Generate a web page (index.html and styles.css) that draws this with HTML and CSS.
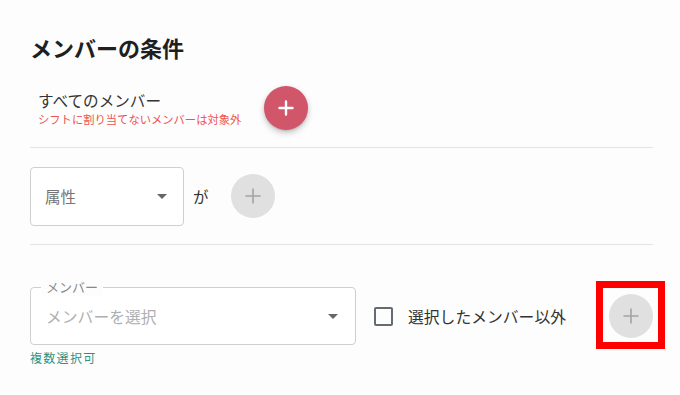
FILE: index.html
```html
<!DOCTYPE html>
<html lang="ja">
<head>
<meta charset="utf-8">
<link rel="stylesheet" href="styles.css">
</head>
<body>
<div class="panel">
  <h2 class="title">メンバーの条件</h2>
  <div class="row row-all">
    <div class="all-text">
      <div class="all-main">すべてのメンバー</div>
      <div class="all-note">シフトに割り当てないメンバーは対象外</div>
    </div>
    <button class="fab fab-red" aria-label="追加">
      <svg width="16" height="16" viewBox="0 0 16 16"><path d="M8 1.5v13M1.5 8h13" stroke="#fff" stroke-width="2.4" stroke-linecap="round"/></svg>
    </button>
  </div>
  <div class="divider"></div>
  <div class="row row-attr">
    <div class="select select-attr">
      <span class="select-value">属性</span>
      <span class="arrow"></span>
    </div>
    <span class="ga">が</span>
    <button class="fab fab-gray" aria-label="追加">
      <svg width="18" height="18" viewBox="0 0 18 18"><path d="M9 1.5v15M1.5 9h15" stroke="#a3a3a3" stroke-width="1.6"/></svg>
    </button>
  </div>
  <div class="divider"></div>
  <div class="row row-member">
    <div class="field">
      <div class="select select-member">
        <span class="float-label">メンバー</span>
        <span class="select-placeholder">メンバーを選択</span>
        <span class="arrow"></span>
      </div>
      <div class="helper">複数選択可</div>
    </div>
    <label class="check">
      <span class="box"></span>
      <span class="check-text">選択したメンバー以外</span>
    </label>
    <div class="fab-wrap">
      <button class="fab fab-gray" aria-label="追加">
        <svg width="18" height="18" viewBox="0 0 18 18"><path d="M9 1.5v15M1.5 9h15" stroke="#a3a3a3" stroke-width="1.6"/></svg>
      </button>
      <div class="highlight"></div>
    </div>
  </div>
</div>
</body>
</html>
```

FILE: styles.css
```css
* { box-sizing: border-box; }
html, body {
  margin: 0;
  padding: 0;
  background: #fdfdfd;
}
body {
  width: 680px;
  height: 395px;
  overflow: hidden;
  font-family: "Noto Sans CJK JP", "Noto Sans", sans-serif;
  color: #333;
}
.panel {
  padding: 34px 27px 0 30px;
}
.title {
  margin: 0;
  font-size: 22px;
  line-height: 26px;
  font-weight: 700;
  color: #1f1f1f;
}
.row {
  display: flex;
  align-items: center;
}
.row-all {
  margin-top: 8px;
  height: 79px;
}
.all-text {
  padding-left: 8px;
}
.all-main {
  font-size: 15.6px;
  line-height: 22px;
  color: #333;
}
.all-note {
  font-size: 11.3px;
  line-height: 16px;
  color: #ef5350;
}
.fab {
  width: 44px;
  height: 44px;
  border-radius: 50%;
  border: none;
  padding: 0;
  display: flex;
  align-items: center;
  justify-content: center;
}
.fab-red {
  margin-left: 23px;
  background: #d1566a;
  box-shadow: 0 3px 6px rgba(0, 0, 0, 0.22), 0 1px 2px rgba(0, 0, 0, 0.12);
}
.fab-gray {
  background: #e0e0e0;
}
.divider {
  height: 1px;
  background: #e3e3e3;
}
.row-attr {
  height: 96px;
}
.select {
  position: relative;
  display: flex;
  align-items: center;
  border: 1px solid #cfcfcf;
  border-radius: 4px;
  background: #fff;
}
.select-attr {
  width: 154px;
  height: 59px;
  padding: 0 16px 0 14px;
}
.select-value {
  font-size: 15.5px;
  color: #757575;
  flex: 1;
}
.arrow {
  width: 0;
  height: 0;
  border-left: 5px solid transparent;
  border-right: 5px solid transparent;
  border-top: 5px solid #666;
}
.ga {
  margin-left: 9px;
  font-size: 15.5px;
  color: #333;
}
.row-attr .fab-gray {
  margin-left: 22px;
}
.row-member {
  margin-top: 42px;
  align-items: flex-start;
}
.field {
  width: 326px;
}
.select-member {
  height: 58px;
  padding: 0 17px 0 15px;
}
.float-label {
  position: absolute;
  left: 10px;
  top: -10px;
  padding: 0 5px;
  font-size: 13px;
  line-height: 18px;
  color: #888;
  background: #fdfdfd;
}
.select-placeholder {
  flex: 1;
  font-size: 15.8px;
  color: #b0b0b0;
}
.helper {
  margin-top: 5px;
  font-size: 12px;
  line-height: 16px;
  letter-spacing: 1.3px;
  color: #2e9283;
}
.check {
  height: 58px;
  display: flex;
  align-items: center;
  margin-left: 18px;
}
.box {
  width: 19px;
  height: 19px;
  border: 2px solid #646b77;
  border-radius: 2px;
}
.check-text {
  margin-left: 15px;
  font-size: 15.8px;
  color: #333;
}
.fab-wrap {
  position: relative;
  margin-left: auto;
  margin-top: 7px;
}
.highlight {
  position: absolute;
  left: -13px;
  top: -13px;
  width: 69px;
  height: 68px;
  border: 7px solid #ff0000;
}
```
